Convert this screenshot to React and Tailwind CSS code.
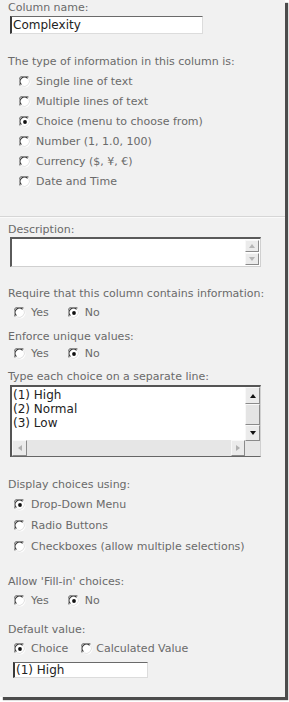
import React from "react";

const font = { fontFamily: '"DejaVu Sans", Verdana, sans-serif' };

function Radio({ checked }) {
  return (
    <svg width="12" height="12" viewBox="0 0 12 12" className="shrink-0">
      <circle cx="6" cy="6" r="5.5" fill="#ffffff" />
      <path d="M1.3 9.5 A5.3 5.3 0 0 1 9.5 1.3" fill="none" stroke="#8a8a8a" strokeWidth="1.2" />
      <path d="M2.4 8.6 A4.2 4.2 0 0 1 8.6 2.4" fill="none" stroke="#333333" strokeWidth="1.1" />
      <path d="M9.8 2.6 A5.3 5.3 0 0 1 2.6 9.8" fill="none" stroke="#e2e2e2" strokeWidth="1" />
      {checked && <circle cx="6" cy="6" r="1.9" fill="#111111" />}
    </svg>
  );
}

function Label({ children, className = "" }) {
  return (
    <div className={`h-[14px] leading-[14px] text-[11px] text-[#6a6a6a] whitespace-nowrap ${className}`}>
      {children}
    </div>
  );
}

function Option({ checked, children, gap = "ml-[5px]" }) {
  return (
    <div className="flex items-center">
      <Radio checked={checked} />
      <span className={`${gap} text-[11px] text-[#6a6a6a] whitespace-nowrap leading-[14px]`}>{children}</span>
    </div>
  );
}

function Arrow({ dir, color }) {
  const pts = {
    up: "1,5 4,1 7,5",
    down: "1,1 4,5 7,1",
    left: "5,1 1,4 5,7",
    right: "1,1 5,4 1,7",
  }[dir];
  const w = dir === "up" || dir === "down" ? 8 : 6;
  const h = dir === "up" || dir === "down" ? 6 : 8;
  return (
    <svg width={w} height={h} viewBox={`0 0 ${w} ${h}`}>
      <polygon points={pts} fill={color} />
    </svg>
  );
}

function SbButton({ dir, color, className = "" }) {
  return (
    <div
      className={`flex items-center justify-center bg-[#ebebeb] border border-t-[#f8f8f8] border-l-[#f8f8f8] border-r-[#8a8a8a] border-b-[#8a8a8a] ${className}`}
    >
      <Arrow dir={dir} color={color} />
    </div>
  );
}

function YesNo({ yes }) {
  return (
    <div className="flex items-center h-[16px] pl-[6px]">
      <Option checked={yes} gap="ml-[5px]">Yes</Option>
      <div className="ml-[19px]">
        <Option checked={!yes} gap="ml-[5px]">No</Option>
      </div>
    </div>
  );
}

export default function App() {
  return (
    <div className="w-[289px] h-[702px] bg-white" style={font}>
      <div className="w-[285px] h-[697px] bg-[#f1f1f1] shadow-[3px_3px_1px_rgba(0,0,0,0.7)] flex flex-col pl-[8px] pt-[1px]">
        <Label>Column name:</Label>
        <div className="mt-[1px] ml-[2px] w-[193px] h-[18px] bg-white border border-t-[#6a6a6a] border-l-[#3a3a3a] border-l-2 border-r-[#dcdcdc] border-b-[#dcdcdc] flex items-center pl-[1px]">
          <span className="text-[12px] text-[#222] leading-[14px]">Complexity</span>
        </div>

        <Label className="mt-[21px]">The type of information in this column is:</Label>
        <div className="mt-[3px] flex flex-col pl-[11px]">
          {[
            ["Single line of text", false],
            ["Multiple lines of text", false],
            ["Choice (menu to choose from)", true],
            ["Number (1, 1.0, 100)", false],
            ["Currency ($, ¥, €)", false],
            ["Date and Time", false],
          ].map(([t, c]) => (
            <div key={t} className="h-[20px] flex items-center">
              <Option checked={c}>{t}</Option>
            </div>
          ))}
        </div>

        <div className="mt-[24px] -ml-[8px] w-[285px] h-px bg-[#d6d6d6]" />
        <div className="-ml-[8px] w-[285px] h-px bg-[#fafafa]" />

        <Label className="mt-[5px]">Description:</Label>
        <div className="ml-[2px] w-[251px] h-[30px] bg-white border border-t-2 border-l-2 border-t-[#5a5a5a] border-l-[#5a5a5a] border-r-[#d0d0d0] border-b-[#d0d0d0] flex justify-end pr-[1px]">
          <div className="w-[14px] flex flex-col gap-[1px] pt-[1px]">
            <SbButton dir="up" color="#b5b5b5" className="h-[12px]" />
            <SbButton dir="down" color="#b5b5b5" className="h-[12px]" />
          </div>
        </div>

        <Label className="mt-[20px]">Require that this column contains information:</Label>
        <div className="mt-[4px]">
          <YesNo yes={false} />
        </div>

        <Label className="mt-[9px]">Enforce unique values:</Label>
        <div className="mt-[2px]">
          <YesNo yes={false} />
        </div>

        <Label className="mt-[8px]">Type each choice on a separate line:</Label>
        <div className="mt-[1px] ml-[2px] w-[251px] h-[72px] bg-white border border-t-2 border-l-2 border-t-[#555] border-l-[#555] border-b-[#666] border-r-[#d0d0d0] flex">
          <div className="flex-1 flex flex-col">
            <div className="flex-1 flex flex-col pl-[1px] pt-[1px] text-[12px] text-[#222] leading-[14px]">
              <div>(1) High</div>
              <div>(2) Normal</div>
              <div>(3) Low</div>
            </div>
            <div className="h-[16px] bg-[#e6e6e6] flex justify-between">
              <SbButton dir="left" color="#b0b0b0" className="w-[15px] h-[16px]" />
              <SbButton dir="right" color="#b0b0b0" className="w-[14px] h-[16px]" />
            </div>
          </div>
          <div className="w-[15px] flex flex-col">
            <SbButton dir="up" color="#111" className="h-[17px]" />
            <div className="h-[21px] bg-[#e4e4e4] border border-t-[#f8f8f8] border-l-[#f8f8f8] border-r-[#8a8a8a] border-b-[#8a8a8a]" />
            <SbButton dir="down" color="#111" className="h-[16px]" />
            <div className="flex-1 bg-[#e6e6e6]" />
          </div>
        </div>

        <Label className="mt-[21px]">Display choices using:</Label>
        <div className="mt-[2px] flex flex-col pl-[6px]">
          {[
            ["Drop-Down Menu", true],
            ["Radio Buttons", false],
            ["Checkboxes (allow multiple selections)", false],
          ].map(([t, c]) => (
            <div key={t} className="h-[21px] flex items-center">
              <Option checked={c}>{t}</Option>
            </div>
          ))}
        </div>

        <Label className="mt-[18px]">Allow 'Fill-in' choices:</Label>
        <div className="mt-[4px]">
          <YesNo yes={false} />
        </div>

        <Label className="mt-[14px]">Default value:</Label>
        <div className="mt-[4px] h-[16px] flex items-center pl-[6px]">
          <Option checked>Choice</Option>
          <div className="ml-[13px]">
            <Option checked={false} gap="ml-[3px]">Calculated Value</Option>
          </div>
        </div>

        <div className="mt-[5px] ml-[5px] w-[135px] h-[16px] bg-white border border-t-[#6a6a6a] border-l-2 border-l-[#3a3a3a] border-r-[#dcdcdc] border-b-[#dcdcdc] flex items-center pl-[1px]">
          <span className="text-[12px] text-[#222] leading-[14px]">(1) High</span>
        </div>
      </div>
    </div>
  );
}
